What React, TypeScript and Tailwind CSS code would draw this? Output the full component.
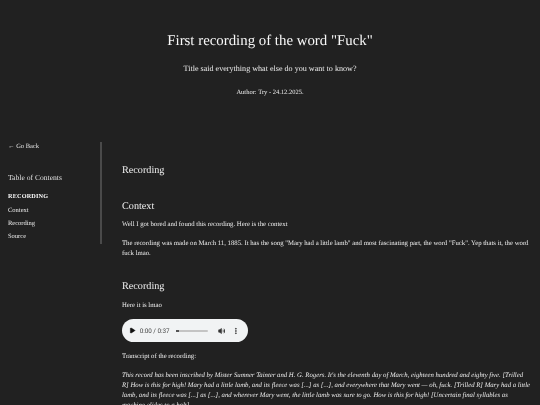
import { Play, Volume2, MoreVertical } from "lucide-react";

const serif = "font-['Liberation_Serif',serif]";

function Sidebar() {
  return (
    <aside className="w-[102px] shrink-0 pl-2 border-r-2 border-[#4a4a4a] h-[102px] text-[#e8e8e8]">
      <p className="text-[6.5px] leading-[8px] mt-[1px] text-[#e0e0e0]">← Go Back</p>
      <h2 className="text-[7.6px] leading-[10px] mt-[22px] text-[#e0e0e0]">Table of Contents</h2>
      <p className="text-[6.2px] leading-[8px] mt-[10px] font-bold tracking-[0.2px] text-white">RECORDING</p>
      <p className="text-[6.5px] leading-[8px] mt-[6px]">Context</p>
      <p className="text-[6.5px] leading-[8px] mt-[5px]">Recording</p>
      <p className="text-[6.5px] leading-[8px] mt-[5px]">Source</p>
    </aside>
  );
}

function Audio() {
  return (
    <div className="w-[126px] h-[23px] mt-[8px] rounded-full bg-[#f1f3f4] flex items-center pl-[7px] pr-[8px] text-[#3b3b3b]">
      <Play size={7} fill="#111" stroke="#111" />
      <span className="ml-[4px] text-[6.3px] leading-[8px] font-['Roboto',sans-serif] whitespace-nowrap text-[#444]">0:00 / 0:37</span>
      <div className="ml-[6px] w-[34px] h-[2px] bg-[#c4c4c4] rounded-full">
        <div className="w-[3px] h-[2px] bg-[#555]" />
      </div>
      <Volume2 size={8} className="ml-[10px]" fill="#333" />
      <MoreVertical size={8} className="ml-[7px]" strokeWidth={3} />
    </div>
  );
}

export default function App() {
  return (
    <div className={`relative w-[540px] h-[405px] overflow-hidden bg-[#212121] text-white ${serif}`}>
      <div className="blur-[0.25px] [text-rendering:geometricPrecision]">
        <header className="flex flex-col items-center pt-[31px] h-[142px]">
          <h1 className="text-[14.85px] leading-[20px] text-[#f8f8f8]">First recording of the word "Fuck"</h1>
          <p className="text-[8.1px] leading-[10px] mt-[13px] text-[#ececec]">Title said everything what else do you want to know?</p>
          <p className="text-[6.5px] leading-[8px] mt-[15px] text-[#ececec]">Author: Try - 24.12.2025.</p>
        </header>
        <div className="flex">
          <Sidebar />
          <main className="pl-[20px] pr-[8px] flex-1 min-w-0">
            <h2 className="text-[10.2px] leading-[13px] mt-[22px] text-[#f0f0f0]">Recording</h2>
            <h2 className="text-[10.2px] leading-[13px] mt-[23px] text-[#f0f0f0]">Context</h2>
            <p className="text-[6.74px] leading-[10px] mt-[7px] text-[#ececec]">Well I got bored and found this recording. Here is the context</p>
            <p className="text-[6.74px] leading-[10px] mt-[9px] text-[#ececec]">The recording was made on March 11, 1885. It has the song "Mary had a little lamb" and most fascinating part, the word "Fuck". Yep thats it, the word fuck lmao.</p>
            <h2 className="text-[10.2px] leading-[13px] mt-[21px] text-[#f0f0f0]">Recording</h2>
            <p className="text-[6.74px] leading-[10px] mt-[8px] text-[#ececec]">Here it is lmao</p>
            <Audio />
            <p className="text-[6.74px] leading-[10px] mt-[10px] text-[#ececec]">Transcript of the recording:</p>
            <p className="text-[6.74px] leading-[10px] mt-[9px] italic text-[#ececec] whitespace-nowrap">
              This record has been inscribed by Mister Sumner Tainter and H. G. Rogers. It's the eleventh day of March, eighteen hundred and eighty five. [Trilled<br />
              R] How is this for high! Mary had a little lamb, and its fleece was [...] as [...], and everywhere that Mary went — oh, fuck. [Trilled R] Mary had a little<br />
              lamb, and its fleece was [...] as [...], and wherever Mary went, the little lamb was sure to go. How is this for high! [Uncertain final syllables as<br />
              machine glides to a halt]
            </p>
          </main>
        </div>
      </div>
    </div>
  );
}
